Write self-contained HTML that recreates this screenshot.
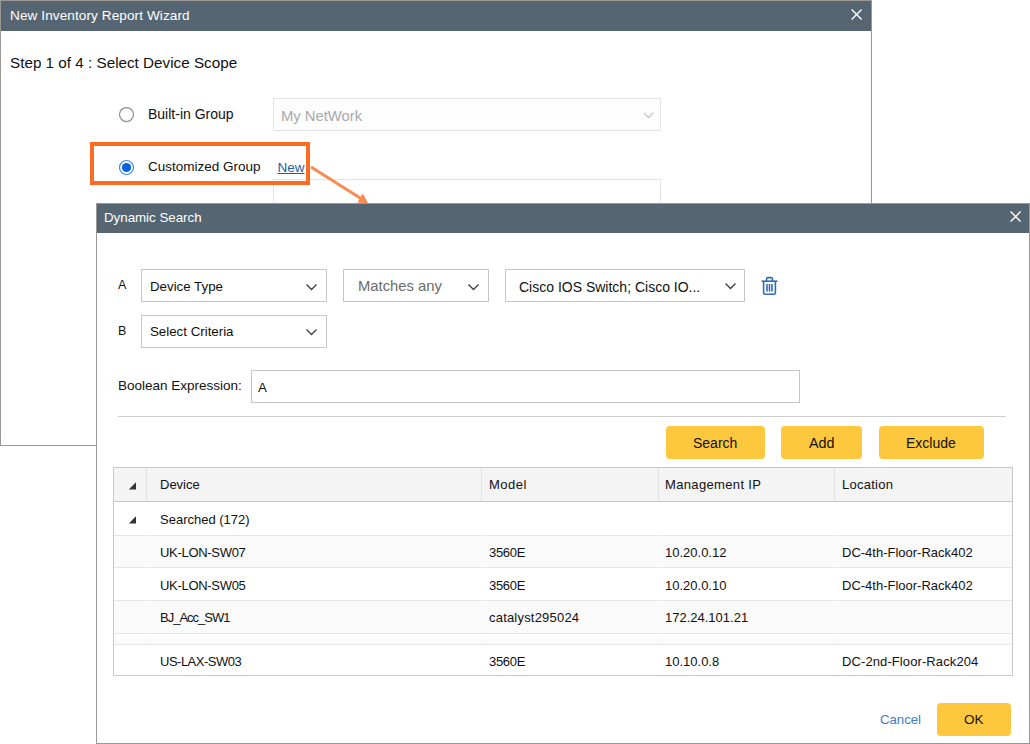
<!DOCTYPE html>
<html><head><meta charset="utf-8">
<style>
*{margin:0;padding:0;box-sizing:border-box}
html,body{width:1030px;height:744px;overflow:hidden;background:#fff;font-family:"Liberation Sans",sans-serif;color:#111}
.a{position:absolute}
.t{position:absolute;white-space:nowrap;line-height:1}
.dlg{position:absolute;background:#fff;border:1px solid #9d9896}
.hdr{position:absolute;left:0;right:0;top:0;background:#556672}
.x{position:absolute}
.dd{position:absolute;border:1px solid #c6c6c6;background:#fff}
.btn{position:absolute;background:#fec83e;border-radius:4px}
.chev{position:absolute}
</style></head><body>

<!-- Outer wizard dialog -->
<div class="dlg" style="left:0;top:0;width:872px;height:446px;">
  <div class="hdr" style="height:30px;"></div>
</div>
<div class="t" style="left:10px;top:9.4px;font-size:13.6px;letter-spacing:0.08px;color:#fff">New Inventory Report Wizard</div>
<svg class="x" style="left:850px;top:8px" width="13" height="13" viewBox="0 0 13 13"><path d="M1.6 1.6L11.6 11.6M11.6 1.6L1.6 11.6" stroke="#fff" stroke-width="1.35"/></svg>

<div class="t" style="left:10px;top:55px;font-size:15.25px;color:#111">Step 1 of 4 : Select Device Scope</div>

<!-- radio 1 -->
<svg class="a" style="left:118px;top:106px" width="17" height="17" viewBox="0 0 17 17"><circle cx="8.5" cy="8.5" r="7" fill="#fff" stroke="#8c8e9c" stroke-width="1.25"/></svg>
<div class="t" style="left:148px;top:107px;font-size:14px">Built-in Group</div>
<div class="a" style="left:273px;top:98px;width:388px;height:33px;border:1px solid #e4e4e4;background:#fdfdfd"></div>
<div class="t" style="left:281px;top:109px;font-size:14.8px;color:#a9a9a9">My NetWork</div>
<svg class="chev" style="left:643px;top:112px" width="11" height="7" viewBox="0 0 11 7"><path d="M1 1L5.5 5.5L10 1" fill="none" stroke="#c4c4c4" stroke-width="1.3"/></svg>

<!-- radio 2 -->
<svg class="a" style="left:118px;top:159px" width="17" height="17" viewBox="0 0 17 17"><circle cx="8.5" cy="8.5" r="7" fill="#fff" stroke="#3b86f2" stroke-width="1.2"/><circle cx="8.5" cy="8.5" r="4.6" fill="#0d5fe2"/></svg>
<div class="t" style="left:148px;top:159.7px;font-size:13.5px">Customized Group</div>
<div class="t" style="left:277.5px;top:161px;font-size:13.5px;color:#1662aa;text-decoration:underline">New</div>
<div class="a" style="left:273px;top:179px;width:388px;height:40px;border:1px solid #e4e4e4;background:#fff"></div>

<!-- orange highlight -->
<div class="a" style="left:90px;top:142px;width:220px;height:43px;border:4px solid #fd6a22"></div>
<svg class="a" style="left:300px;top:155px" width="80" height="55" viewBox="0 0 80 55"><path d="M11 12L61 43.6" stroke="#fb8a50" stroke-width="3"/><path d="M68.2 48.2L57.3 47.4L62.8 38.6Z" fill="#fb8a50"/></svg>

<!-- Inner dynamic search dialog -->
<div class="dlg" style="left:96px;top:203px;width:934px;height:541px;">
  <div class="hdr" style="height:29px;"></div>
</div>
<div class="t" style="left:104px;top:211px;font-size:13.3px;color:#fff">Dynamic Search</div>
<svg class="x" style="left:1009px;top:210px" width="13" height="13" viewBox="0 0 13 13"><path d="M1.6 1.6L11.6 11.6M11.6 1.6L1.6 11.6" stroke="#fff" stroke-width="1.35"/></svg>

<div class="t" style="left:118px;top:279px;font-size:12.5px">A</div>
<div class="dd" style="left:141px;top:269px;width:186px;height:33px"></div>
<div class="t" style="left:150px;top:280px;font-size:13.3px">Device Type</div>
<svg class="chev" style="left:305px;top:283px" width="13" height="8" viewBox="0 0 13 8"><path d="M1.5 1.5L6.5 6.5L11.5 1.5" fill="none" stroke="#3a3a3a" stroke-width="1.25"/></svg>

<div class="dd" style="left:343px;top:269px;width:146px;height:33px"></div>
<div class="t" style="left:358px;top:279px;font-size:14.8px;color:#6b6b6b">Matches any</div>
<svg class="chev" style="left:467px;top:283px" width="13" height="8" viewBox="0 0 13 8"><path d="M1.5 1.5L6.5 6.5L11.5 1.5" fill="none" stroke="#3a3a3a" stroke-width="1.25"/></svg>

<div class="dd" style="left:505px;top:269px;width:240px;height:33px"></div>
<div class="t" style="left:519px;top:280px;font-size:14px">Cisco IOS Switch; Cisco IO...</div>
<svg class="chev" style="left:724px;top:282px" width="13" height="8" viewBox="0 0 13 8"><path d="M1.5 1.5L6.5 6.5L11.5 1.5" fill="none" stroke="#3a3a3a" stroke-width="1.25"/></svg>

<!-- trash -->
<svg class="a" style="left:760px;top:276px" width="19" height="20" viewBox="0 0 19 20"><g fill="none" stroke="#2d6db6" stroke-width="1.6"><path d="M1.5 5.2H17.5"/><path d="M6.6 5V2.8Q6.6 1.6 7.8 1.6H11.2Q12.4 1.6 12.4 2.8V5"/><path d="M3.6 5.5V16.8Q3.6 18.3 5.1 18.3H13.9Q15.4 18.3 15.4 16.8V5.5"/><path d="M7 8V15.5M9.5 8V15.5M12 8V15.5"/></g></svg>

<div class="t" style="left:118px;top:325px;font-size:12.5px">B</div>
<div class="dd" style="left:141px;top:315px;width:186px;height:33px"></div>
<div class="t" style="left:150px;top:325px;font-size:13.3px">Select Criteria</div>
<svg class="chev" style="left:305px;top:328px" width="13" height="8" viewBox="0 0 13 8"><path d="M1.5 1.5L6.5 6.5L11.5 1.5" fill="none" stroke="#3a3a3a" stroke-width="1.25"/></svg>

<div class="t" style="left:118px;top:379px;font-size:13.5px">Boolean Expression:</div>
<div class="dd" style="left:251px;top:370px;width:549px;height:33px"></div>
<div class="t" style="left:258px;top:381px;font-size:13.3px">A</div>

<div class="a" style="left:118px;top:416px;width:888px;height:1px;background:#cfcfcf"></div>

<div class="btn" style="left:666px;top:426px;width:99px;height:33px"></div>
<div class="t" style="left:693px;top:436px;font-size:14px">Search</div>
<div class="btn" style="left:781px;top:426px;width:81px;height:33px"></div>
<div class="t" style="left:809px;top:436px;font-size:14.3px">Add</div>
<div class="btn" style="left:879px;top:426px;width:105px;height:33px"></div>
<div class="t" style="left:906px;top:436px;font-size:14px">Exclude</div>

<!-- table -->
<div class="a" style="left:113px;top:467px;width:900px;height:209px;border:1px solid #c9c9c9;background:#fff"></div>
<div class="a" style="left:114px;top:468px;width:898px;height:33px;background:#f4f4f4"></div>
<div class="a" style="left:114px;top:501px;width:898px;height:1px;background:#c9c9c9"></div>
<div class="a" style="left:146px;top:468px;width:1px;height:33px;background:#e2e2e2"></div>
<div class="a" style="left:481px;top:468px;width:1px;height:33px;background:#e2e2e2"></div>
<div class="a" style="left:658px;top:468px;width:1px;height:33px;background:#e2e2e2"></div>
<div class="a" style="left:834px;top:468px;width:1px;height:33px;background:#e2e2e2"></div>

<svg class="a" style="left:128px;top:482px" width="9" height="8" viewBox="0 0 9 8"><path d="M8 0.2V7.4H0.8Z" fill="#333"/></svg>
<div class="t" style="left:160px;top:478px;font-size:13px">Device</div>
<div class="t" style="left:489px;top:478px;font-size:13px;letter-spacing:0.5px">Model</div>
<div class="t" style="left:665px;top:478px;font-size:13px;letter-spacing:0.35px">Management IP</div>
<div class="t" style="left:842px;top:478px;font-size:13px;letter-spacing:0.25px">Location</div>

<!-- rows -->
<svg class="a" style="left:128px;top:516px" width="9" height="8" viewBox="0 0 9 8"><path d="M8 0.2V7.4H0.8Z" fill="#333"/></svg>
<div class="t" style="left:160px;top:513px;font-size:13px">Searched (172)</div>
<div class="a" style="left:114px;top:535px;width:898px;height:1px;background:#e6e6e6"></div>

<div class="a" style="left:114px;top:536px;width:898px;height:31px;background:#fafafa"></div>
<div class="t" style="left:160px;top:546px;font-size:13px;letter-spacing:-0.3px">UK-LON-SW07</div>
<div class="t" style="left:489px;top:546px;font-size:13px;letter-spacing:-0.3px">3560E</div>
<div class="t" style="left:665px;top:546px;font-size:13px">10.20.0.12</div>
<div class="t" style="left:842px;top:546px;font-size:13px">DC-4th-Floor-Rack402</div>
<div class="a" style="left:114px;top:567px;width:898px;height:1px;background:#e6e6e6"></div>

<div class="t" style="left:160px;top:579px;font-size:13px;letter-spacing:-0.3px">UK-LON-SW05</div>
<div class="t" style="left:489px;top:579px;font-size:13px;letter-spacing:-0.3px">3560E</div>
<div class="t" style="left:665px;top:579px;font-size:13px">10.20.0.10</div>
<div class="t" style="left:842px;top:579px;font-size:13px">DC-4th-Floor-Rack402</div>
<div class="a" style="left:114px;top:600px;width:898px;height:1px;background:#e6e6e6"></div>

<div class="a" style="left:114px;top:601px;width:898px;height:32px;background:#fafafa"></div>
<div class="t" style="left:160px;top:611px;font-size:13px;letter-spacing:-1px">BJ_Acc_SW1</div>
<div class="t" style="left:489px;top:611px;font-size:13px;letter-spacing:0.2px">catalyst295024</div>
<div class="t" style="left:665px;top:611px;font-size:13px">172.24.101.21</div>
<div class="a" style="left:114px;top:633px;width:898px;height:1px;background:#e6e6e6"></div>
<div class="a" style="left:114px;top:639px;width:898px;height:5px;background:#fafafa"></div>
<div class="a" style="left:114px;top:644px;width:898px;height:1px;background:#e6e6e6"></div>

<div class="t" style="left:160px;top:655px;font-size:13px;letter-spacing:-0.5px">US-LAX-SW03</div>
<div class="t" style="left:489px;top:655px;font-size:13px;letter-spacing:-0.3px">3560E</div>
<div class="t" style="left:665px;top:655px;font-size:13px">10.10.0.8</div>
<div class="t" style="left:842px;top:655px;font-size:13px;letter-spacing:0.1px">DC-2nd-Floor-Rack204</div>

<div class="a" style="left:146px;top:535px;width:1px;height:1px;background:#f6f6f6"></div><div class="a" style="left:481px;top:535px;width:1px;height:1px;background:#f6f6f6"></div><div class="a" style="left:658px;top:535px;width:1px;height:1px;background:#f6f6f6"></div><div class="a" style="left:834px;top:535px;width:1px;height:1px;background:#f6f6f6"></div><div class="a" style="left:146px;top:567px;width:1px;height:1px;background:#f6f6f6"></div><div class="a" style="left:481px;top:567px;width:1px;height:1px;background:#f6f6f6"></div><div class="a" style="left:658px;top:567px;width:1px;height:1px;background:#f6f6f6"></div><div class="a" style="left:834px;top:567px;width:1px;height:1px;background:#f6f6f6"></div><div class="a" style="left:146px;top:600px;width:1px;height:1px;background:#f6f6f6"></div><div class="a" style="left:481px;top:600px;width:1px;height:1px;background:#f6f6f6"></div><div class="a" style="left:658px;top:600px;width:1px;height:1px;background:#f6f6f6"></div><div class="a" style="left:834px;top:600px;width:1px;height:1px;background:#f6f6f6"></div><div class="a" style="left:146px;top:633px;width:1px;height:1px;background:#f6f6f6"></div><div class="a" style="left:481px;top:633px;width:1px;height:1px;background:#f6f6f6"></div><div class="a" style="left:658px;top:633px;width:1px;height:1px;background:#f6f6f6"></div><div class="a" style="left:834px;top:633px;width:1px;height:1px;background:#f6f6f6"></div><div class="a" style="left:146px;top:644px;width:1px;height:1px;background:#f6f6f6"></div><div class="a" style="left:481px;top:644px;width:1px;height:1px;background:#f6f6f6"></div><div class="a" style="left:658px;top:644px;width:1px;height:1px;background:#f6f6f6"></div><div class="a" style="left:834px;top:644px;width:1px;height:1px;background:#f6f6f6"></div>
<div class="t" style="left:880px;top:713px;font-size:13.2px;color:#3f7bbd">Cancel</div>
<div class="btn" style="left:937px;top:703px;width:74px;height:33px"></div>
<div class="t" style="left:964px;top:713px;font-size:13.5px">OK</div>

</body></html>
